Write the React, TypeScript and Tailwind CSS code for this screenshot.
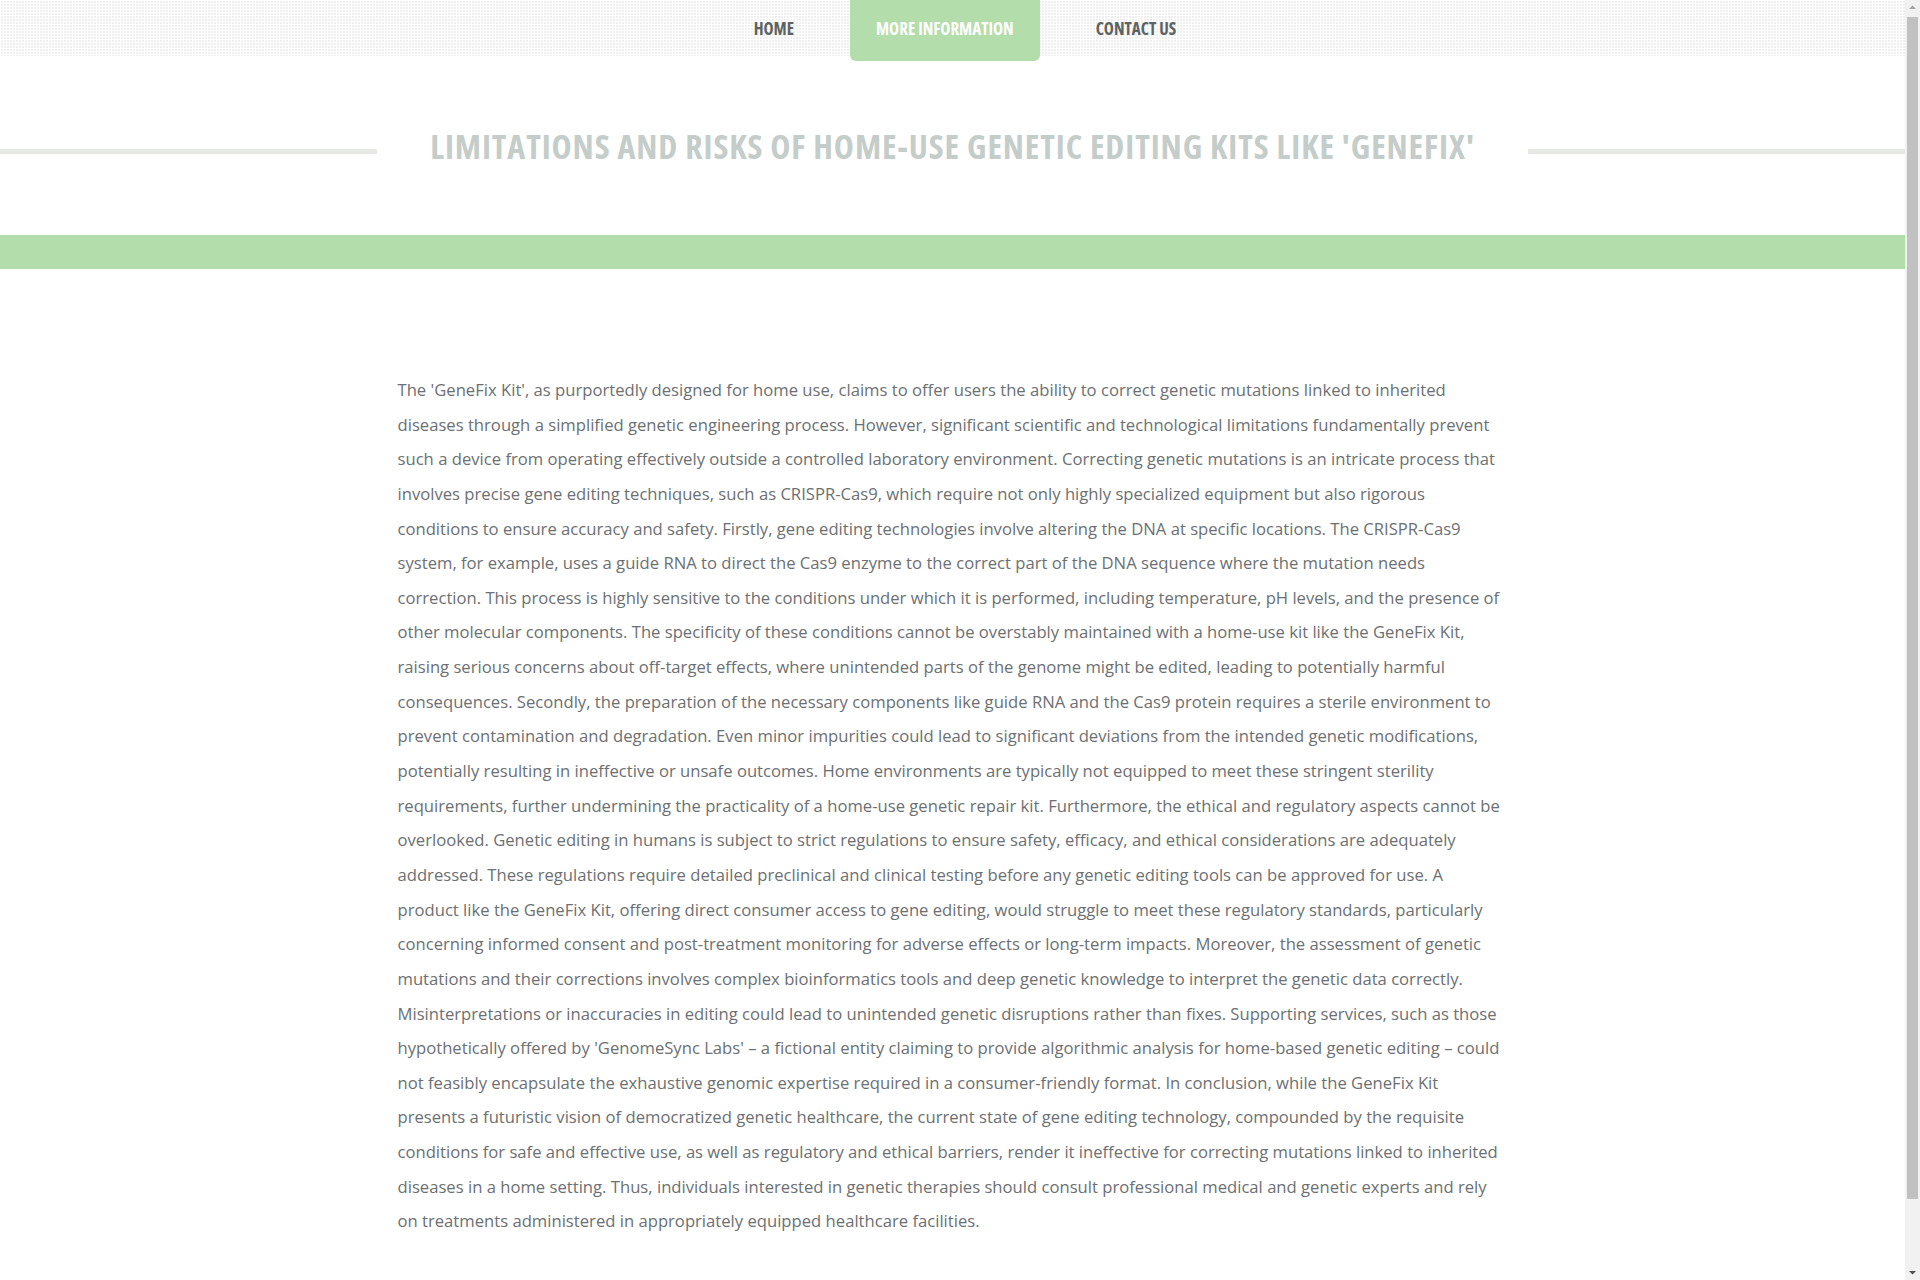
import React from 'react';

const navItems = [
  { label: 'HOME', active: false },
  { label: 'MORE INFORMATION', active: true },
  { label: 'CONTACT US', active: false },
];

const bodyText =
  "The 'GeneFix Kit', as purportedly designed for home use, claims to offer users the ability to correct genetic mutations linked to inherited diseases through a simplified genetic engineering process. However, significant scientific and technological limitations fundamentally prevent such a device from operating effectively outside a controlled laboratory environment. Correcting genetic mutations is an intricate process that involves precise gene editing techniques, such as CRISPR-Cas9, which require not only highly specialized equipment but also rigorous conditions to ensure accuracy and safety. Firstly, gene editing technologies involve altering the DNA at specific locations. The CRISPR-Cas9 system, for example, uses a guide RNA to direct the Cas9 enzyme to the correct part of the DNA sequence where the mutation needs correction. This process is highly sensitive to the conditions under which it is performed, including temperature, pH levels, and the presence of other molecular components. The specificity of these conditions cannot be overstably maintained with a home-use kit like the GeneFix Kit, raising serious concerns about off-target effects, where unintended parts of the genome might be edited, leading to potentially harmful consequences. Secondly, the preparation of the necessary components like guide RNA and the Cas9 protein requires a sterile environment to prevent contamination and degradation. Even minor impurities could lead to significant deviations from the intended genetic modifications, potentially resulting in ineffective or unsafe outcomes. Home environments are typically not equipped to meet these stringent sterility requirements, further undermining the practicality of a home-use genetic repair kit. Furthermore, the ethical and regulatory aspects cannot be overlooked. Genetic editing in humans is subject to strict regulations to ensure safety, efficacy, and ethical considerations are adequately addressed. These regulations require detailed preclinical and clinical testing before any genetic editing tools can be approved for use. A product like the GeneFix Kit, offering direct consumer access to gene editing, would struggle to meet these regulatory standards, particularly concerning informed consent and post-treatment monitoring for adverse effects or long-term impacts. Moreover, the assessment of genetic mutations and their corrections involves complex bioinformatics tools and deep genetic knowledge to interpret the genetic data correctly. Misinterpretations or inaccuracies in editing could lead to unintended genetic disruptions rather than fixes. Supporting services, such as those hypothetically offered by 'GenomeSync Labs' \u2013 a fictional entity claiming to provide algorithmic analysis for home-based genetic editing \u2013 could not feasibly encapsulate the exhaustive genomic expertise required in a consumer-friendly format. In conclusion, while the GeneFix Kit presents a futuristic vision of democratized genetic healthcare, the current state of gene editing technology, compounded by the requisite conditions for safe and effective use, as well as regulatory and ethical barriers, render it ineffective for correcting mutations linked to inherited diseases in a home setting. Thus, individuals interested in genetic therapies should consult professional medical and genetic experts and rely on treatments administered in appropriately equipped healthcare facilities.";

// the page scrolls inside this frame; the bar on the right mirrors the browser's scrollbar
function ScrollBar() {
  return (
    <div className="flex h-screen w-[15px] shrink-0 flex-col items-center bg-[#f1f1f1]">
      <svg width="15" height="15" viewBox="0 0 15 15" className="shrink-0">
        <path d="M4 9 L7.5 5.5 L11 9 Z" fill="#a3a3a3" />
      </svg>
      <div className="mt-[2px] w-[11px] flex-1 bg-[#c1c1c1]" />
      <div className="h-[66px] w-full" />
      <svg width="15" height="15" viewBox="0 0 15 15" className="shrink-0">
        <path d="M4 6 L7.5 9.5 L11 6 Z" fill="#505050" />
      </svg>
    </div>
  );
}

export default function App() {
  return (
    <div className="flex h-screen bg-white font-['Open_Sans',sans-serif]">
      <div className="h-screen min-w-0 flex-1 overflow-y-auto">
        {/* Top navigation */}
        <header className="relative h-[56px] bg-[#efefef] [background-image:linear-gradient(90deg,#fff_1px,transparent_1px),linear-gradient(#fff_1px,transparent_1px)] [background-size:3px_3px]">
          <nav className="flex h-full items-start justify-center gap-[30px] pl-[25px]">
            {navItems.map((item) =>
              item.active ? (
                <a
                  key={item.label}
                  className="flex h-[61px] items-center rounded-b-[6px] bg-[#b3ddab] px-[26px] pt-[1px] pb-[4px] text-[17px] font-bold text-white [font-stretch:75%]"
                >
                  {item.label}
                </a>
              ) : (
                <a
                  key={item.label}
                  className="flex h-[56px] items-center px-[26px] pt-[1px] text-[17px] font-bold text-[#5d6361] [font-stretch:75%]"
                >
                  {item.label}
                </a>
              )
            )}
          </nav>
        </header>

        {/* Title */}
        <div className="flex items-center pt-[68px] pb-[67px]">
          <div className="mt-[10px] h-[5px] flex-1 bg-[#e6e8e6]" />
          <h1 className="w-[1151px] text-center text-[34px] leading-[44px] font-bold tracking-[0.9px] text-[#c4cdc9] [font-stretch:75%]">
            LIMITATIONS AND RISKS OF HOME-USE GENETIC EDITING KITS LIKE 'GENEFIX'
          </h1>
          <div className="mt-[10px] h-[5px] flex-1 bg-[#e6e8e6]" />
        </div>

        {/* Green band */}
        <div className="h-[34px] bg-[#b3ddab]" />

        {/* Content */}
        <main className="mx-auto w-[1110px] pt-[104px] pb-[116px]">
          <p className="text-[16.65px] leading-[34.64px] text-[#6c7072]">{bodyText}</p>
        </main>
      </div>
      <ScrollBar />
    </div>
  );
}
